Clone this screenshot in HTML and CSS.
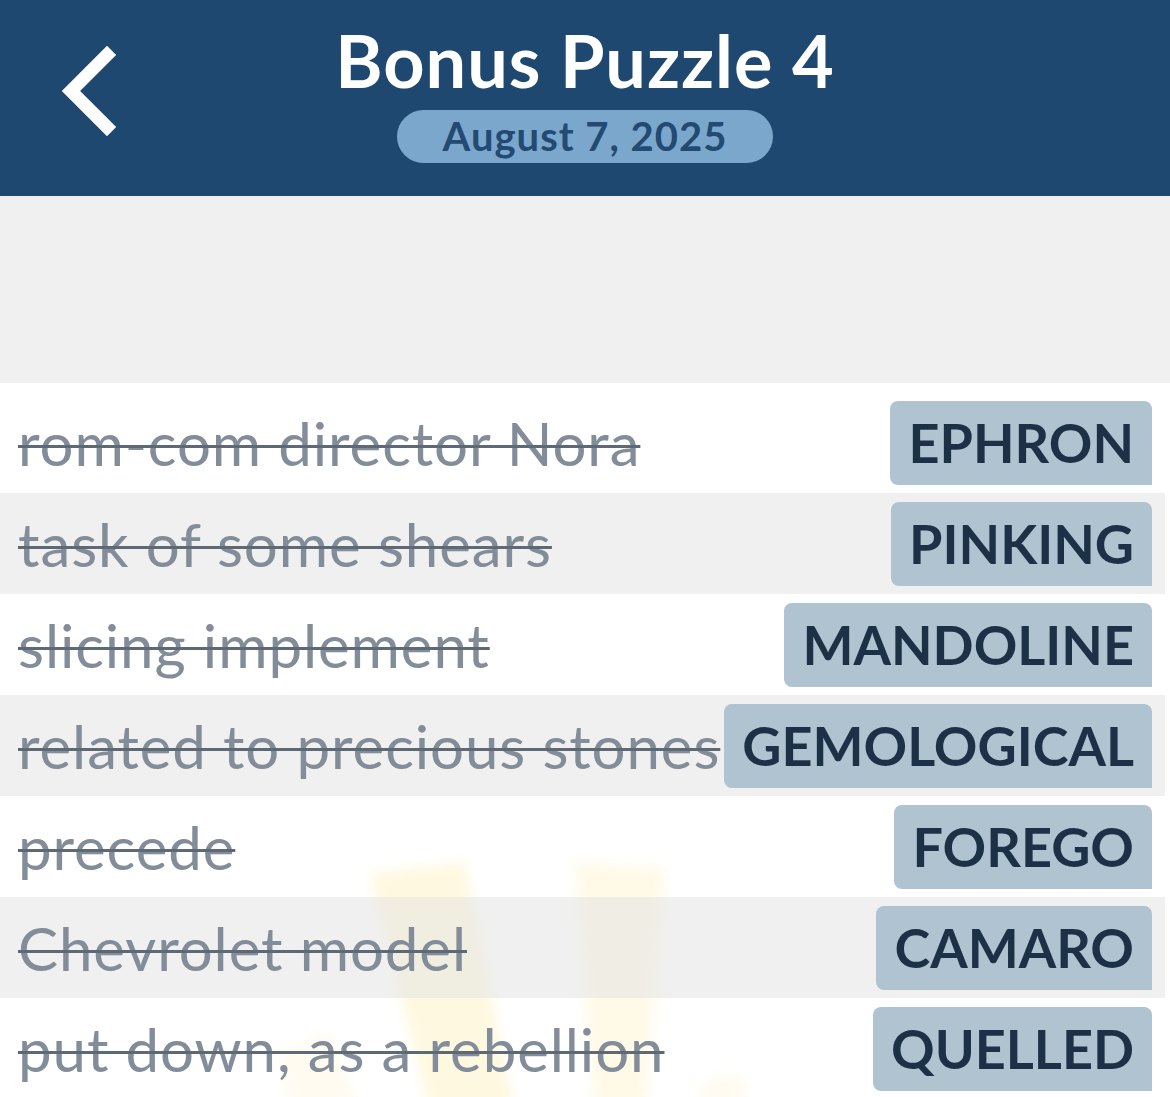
FILE: index.html
```html
<!DOCTYPE html>
<html lang="en">
<head>
<meta charset="utf-8">
<title>Bonus Puzzle 4</title>
<link rel="stylesheet" href="styles.css">
</head>
<body>
<header class="topbar">
  <div class="back">
    <svg class="back-icon" width="64" height="96" viewBox="0 0 64 96" aria-hidden="true">
      <polyline points="50,12 14,48 50,84" fill="none" stroke="#ffffff" stroke-width="13" stroke-linecap="square" stroke-linejoin="miter"/>
    </svg>
  </div>
  <div class="titles">
    <h1 class="title">Bonus Puzzle 4</h1>
    <div class="date-pill">August 7, 2025</div>
  </div>
  <div class="spacer-col"></div>
</header>

<div class="gap-area"></div>

<main class="clue-list">
  <svg class="watermark" width="600" height="280" viewBox="0 0 600 280" aria-hidden="true">
    <defs>
      <filter id="soft" x="-20%" y="-20%" width="140%" height="140%">
        <feGaussianBlur stdDeviation="6"/>
      </filter>
    </defs>
    <g filter="url(#soft)" fill="#ffd23c">
      <polygon points="120,40 215,30 265,280 180,280" opacity="0.16"/>
      <polygon points="325,30 415,35 395,280 345,280" opacity="0.13"/>
      <polygon points="30,220 80,200 110,280 40,280" opacity="0.08"/>
      <polygon points="450,250 490,240 500,280 455,280" opacity="0.08"/>
    </g>
  </svg>

  <div class="row">
    <span class="clue">rom-com director Nora</span>
    <span class="answer">EPHRON</span>
  </div>
  <div class="row alt">
    <span class="clue">task of some shears</span>
    <span class="answer">PINKING</span>
  </div>
  <div class="row">
    <span class="clue">slicing implement</span>
    <span class="answer">MANDOLINE</span>
  </div>
  <div class="row alt">
    <span class="clue">related to precious stones</span>
    <span class="answer">GEMOLOGICAL</span>
  </div>
  <div class="row">
    <span class="clue">precede</span>
    <span class="answer">FOREGO</span>
  </div>
  <div class="row alt">
    <span class="clue">Chevrolet model</span>
    <span class="answer">CAMARO</span>
  </div>
  <div class="row">
    <span class="clue">put down, as a rebellion</span>
    <span class="answer">QUELLED</span>
  </div>
</main>
</body>
</html>
```

FILE: styles.css
```css
* {
  box-sizing: border-box;
}

html, body {
  margin: 0;
  padding: 0;
}

body {
  width: 1170px;
  height: 1097px;
  overflow: hidden;
  background: #ffffff;
  font-family: Lato, "Noto Sans", "DejaVu Sans", sans-serif;
}

.topbar {
  height: 196px;
  background: #1f4870;
  display: grid;
  grid-template-columns: 1fr auto 1fr;
}

.back {
  padding-left: 57px;
  padding-top: 43px;
}

.back-icon {
  display: block;
}

.titles {
  display: flex;
  flex-direction: column;
  align-items: center;
  padding-top: 24px;
}

.title {
  margin: 0;
  font-size: 72px;
  line-height: 72px;
  font-weight: 700;
  color: #ffffff;
  letter-spacing: 1px;
}

.date-pill {
  margin-top: 14px;
  height: 53px;
  padding: 0 46px;
  border-radius: 27px;
  background: #7ba7cc;
  color: #224a72;
  font-size: 40px;
  font-weight: 700;
  line-height: 53px;
  letter-spacing: 1px;
}

.gap-area {
  height: 187px;
  background: #f0f0f0;
}

.clue-list {
  position: relative;
  width: 1165px;
  padding-top: 9px;
  background: #ffffff;
}

.watermark {
  position: absolute;
  left: 250px;
  top: 450px;
  pointer-events: none;
}

.row {
  position: relative;
  height: 101px;
  display: flex;
  align-items: center;
  justify-content: space-between;
  padding: 0 13px 0 18px;
}

.row.alt {
  background: rgba(225, 225, 225, 0.5);
}

.clue {
  font-size: 60px;
  font-weight: 400;
  color: #838d99;
  letter-spacing: 0.9px;
  text-decoration: line-through;
  text-decoration-color: #5d6975;
  text-decoration-thickness: 3px;
  white-space: nowrap;
}

.answer {
  height: 84px;
  display: flex;
  align-items: center;
  padding: 0 18px;
  background: #b0c3d1;
  border-radius: 8px 8px 0 8px;
  color: #1d3146;
  font-size: 54px;
  font-weight: 700;
  letter-spacing: 0;
  white-space: nowrap;
}
```
